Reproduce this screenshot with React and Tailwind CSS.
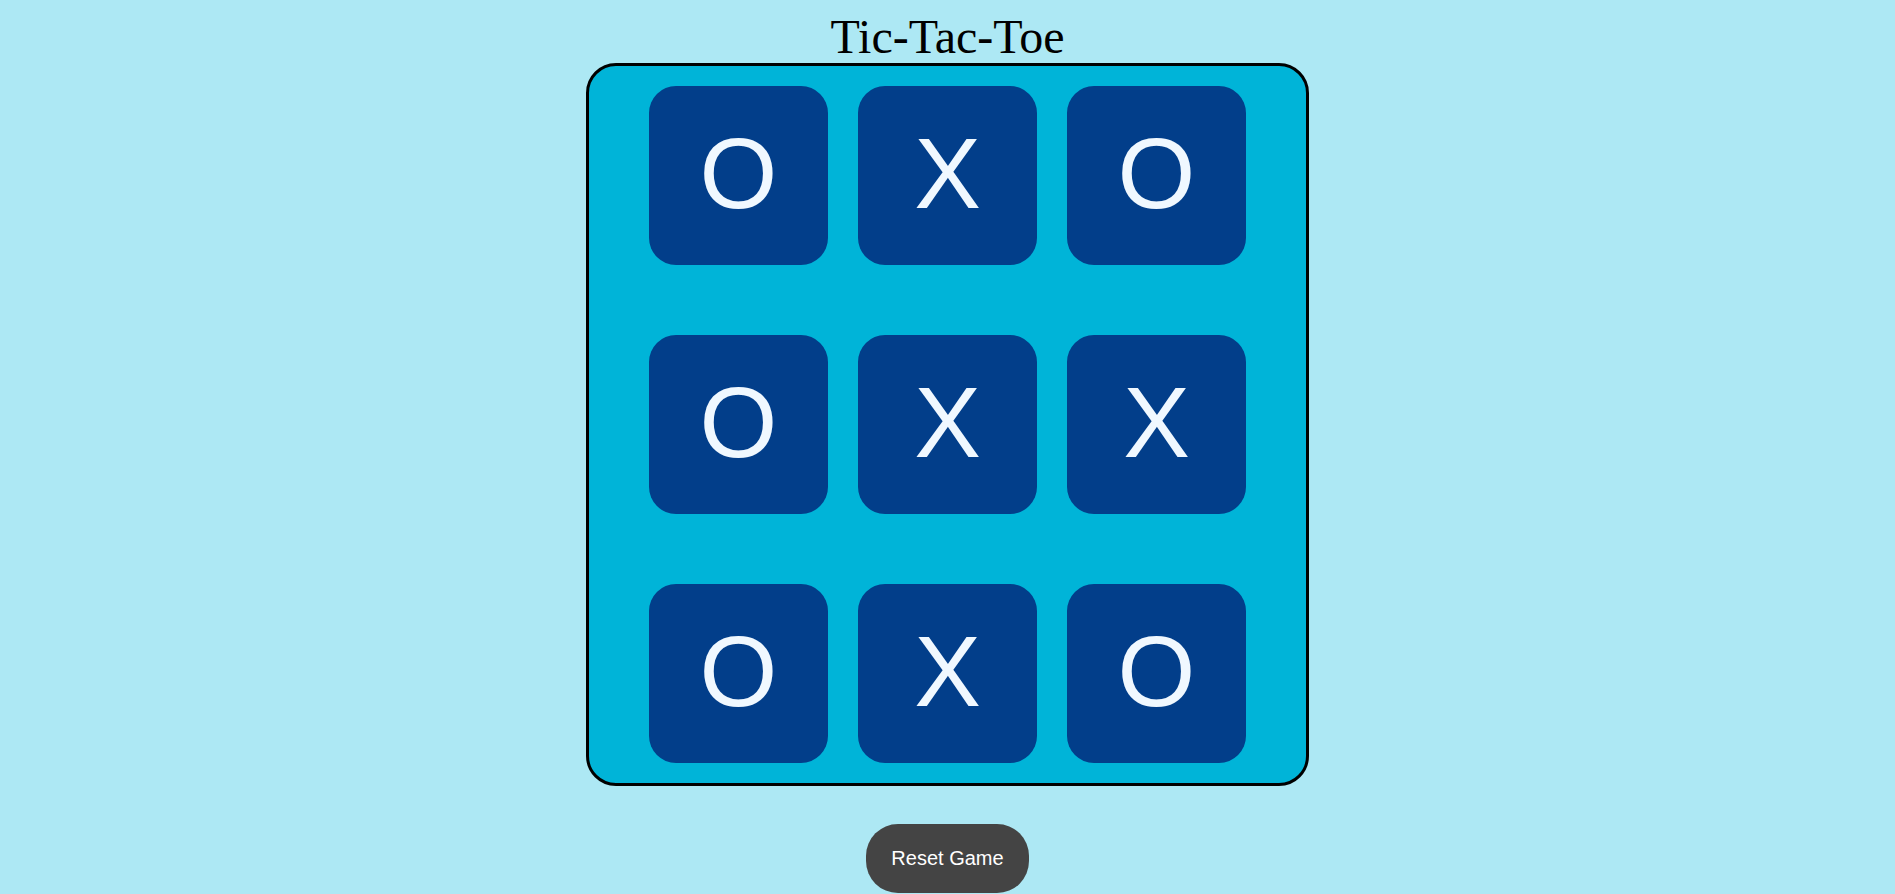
const board = ["O", "X", "O", "O", "X", "X", "O", "X", "O"];

export default function App() {
  return (
    <div className="min-h-screen bg-[#ade8f4] flex flex-col items-center pt-[10px]">
      <h1 className="text-[48px] leading-[53px] text-black font-['Liberation_Serif','Times_New_Roman',serif]">
        Tic-Tac-Toe
      </h1>

      <div className="w-[723px] h-[723px] border-[3px] border-black rounded-[30px] bg-[#00b4d8] grid grid-cols-[repeat(3,179px)] grid-rows-[repeat(3,179px)] gap-x-[30px] gap-y-[70px] justify-center content-center">
        {board.map((v, i) => (
          <button
            key={i}
            className="bg-[#023e8a] rounded-[27px] flex items-center justify-center pb-[5px] text-[100px] leading-none text-[#f0f8ff] font-['Liberation_Sans',Arial,sans-serif]"
          >
            {v}
          </button>
        ))}
      </div>

      <button className="mt-[38px] bg-[#444444] text-white text-[20px] leading-[23px] px-[25px] py-[23px] rounded-[32px] font-['Liberation_Sans',Arial,sans-serif]">
        Reset Game
      </button>
    </div>
  );
}
